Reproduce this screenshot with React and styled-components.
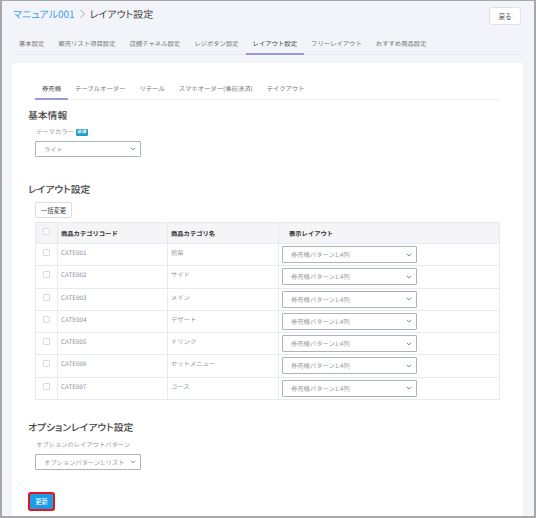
import React from 'react'
import styled, { createGlobalStyle } from 'styled-components'

const c_blue = '#3c9ee5'
const c_line = '#e8eaf2'
const c_text = '#444'
const c_muted = '#999'

const GlobalStyle = createGlobalStyle`
  html, body {
    margin: 0;
    padding: 0;
    background: #fff;
  }
  * {
    box-sizing: border-box;
  }
  body {
    font-family: "Noto Sans CJK JP", "Noto Sans", sans-serif;
    text-rendering: geometricPrecision;
    color: ${c_text};
  }
`

const Frame = styled.div`
  width: 536px;
  height: 518px;
  overflow: hidden;
  background: #f3f4f9;
  border-top: 1px solid #a7a7a7;
  border-left: 2px solid #a7a7a7;
  border-right: 2px solid #a7a7a7;
  border-bottom: 2px solid #a7a7a7;
`

const Header = styled.div`
  display: flex;
  justify-content: space-between;
  align-items: flex-start;
  padding: 4px 13px 0 11px;
`

const Title = styled.div`
  display: flex;
  align-items: center;
  gap: 5px;
  font-size: 10px;
  line-height: 17px;
  font-feature-settings: "palt" 1;
  color: ${c_text};
  a {
    color: ${c_blue};
    text-decoration: none;
  }
  svg {
    color: #aaa;
  }
`

const BackButton = styled.button`
  margin-top: 2px;
  width: 32px;
  height: 18px;
  padding: 0;
  border: 1px solid #dde2ee;
  border-radius: 3px;
  background: #fff;
  font-family: inherit;
  font-size: 6.3px;
  color: ${c_text};
`

const Tabs = styled.div`
  display: flex;
  margin: ${p => (p.inner ? '16px 7px 0' : '8px 10px 0')};
  border-bottom: 1px solid ${p => (p.inner ? '#eef0f6' : c_line)};
`

const Tab = styled.div`
  padding: 4px 7px 3px;
  line-height: ${p => (p.inner ? '12px' : '13px')};
  font-size: 6.35px;
  white-space: nowrap;
  color: ${p => (p.active ? c_text : '#777')};
  border-bottom: 2px solid ${p => (p.active ? '#9899dd' : 'transparent')};
  margin-bottom: -1px;
`

const Card = styled.div`
  margin: 8px 11px 0 10px;
  padding: 0 16px 40px;
  background: #fff;
  border-radius: 3px;
  overflow: hidden;
`

const SectionTitle = styled.div`
  margin-top: ${p => p.gap}px;
  font-size: 9.8px;
  line-height: 14px;
  font-weight: 500;
  font-feature-settings: "palt" 1;
  color: ${c_text};
`

const Field = styled.div`
  padding-left: 7px;
`

const Label = styled.div`
  display: flex;
  align-items: center;
  gap: 2px;
  margin-top: ${p => p.gap}px;
  padding-left: 1px;
  font-size: 6.3px;
  line-height: 10px;
  color: ${c_muted};
`

const Badge = styled.span`
  display: inline-flex;
  align-items: center;
  justify-content: center;
  width: 12px;
  height: 7px;
  border-radius: 1px;
  background: #1b9fc6;
  color: #fff;
  font-size: 4.5px;
  font-weight: 700;
`

const Select = styled.div`
  display: flex;
  align-items: center;
  justify-content: space-between;
  width: ${p => p.width}px;
  height: ${p => p.height || 16}px;
  margin-top: ${p => p.gap || 0}px;
  padding: 0 4px 0 8px;
  border: 1px solid #aeb0c6;
  border-radius: 1px;
  background: #fff;
  font-size: 6.3px;
  color: ${c_muted};
  white-space: nowrap;
  svg {
    color: #747a92;
    flex-shrink: 0;
  }
`

const Button = styled.button`
  display: block;
  margin-top: 6px;
  width: 37px;
  height: 16px;
  padding: 0;
  border: 1px solid #d6ddeb;
  border-radius: 2px;
  background: #fff;
  font-family: inherit;
  font-size: 6.3px;
  color: ${c_text};
`

const Table = styled.table`
  width: 465px;
  margin: 4px 0 0 7px;
  border-collapse: collapse;
  table-layout: fixed;
  border: 1px solid ${c_line};
`

const Th = styled.th`
  height: 21px;
  padding: 0 3px 0 ${p => p.indent || 3}px;
  background: #f5f5f7;
  border-right: 1px solid ${c_line};
  text-align: left;
  font-size: 6.3px;
  font-weight: 700;
  color: #333;
  vertical-align: middle;
`

const Tr = styled.tr`
  height: 22.3px;
  border-top: 1px solid ${c_line};
`

const Td = styled.td`
  padding: 3px 3px 0;
  border-right: 1px solid ${c_line};
  font-size: 6.3px;
  line-height: 11px;
  color: ${p => (p.code ? '#8c90a0' : c_muted)};
  vertical-align: top;
`

const SelectTd = styled(Td)`
  padding: 2px 3px 0;
`

const Check = styled.span`
  display: block;
  width: 7px;
  height: 7px;
  margin: ${p => (p.head ? '-3px' : '2px')} auto 0;
  border: 1px solid #d8dbe6;
  border-radius: 1px;
  background: #fff;
`

const SubmitButton = styled.button`
  display: block;
  margin: 24px 0 0 2px;
  width: 23px;
  height: 15px;
  padding: 0;
  border: none;
  border-radius: 1px;
  background: #1a9ce6;
  box-shadow: 0 0 0 2px #e8141c;
  outline: none;
  font-family: inherit;
  font-size: 6.3px;
  color: #fff;
`

const Chevron = ({ size = 6 }) => (
  <svg width={size} height={size} viewBox="0 0 10 10" fill="none">
    <path d="M2 3.5 L5 6.5 L8 3.5" stroke="currentColor" strokeWidth="1.6" strokeLinecap="round" strokeLinejoin="round" />
  </svg>
)

const Arrow = () => (
  <svg width="5" height="10" viewBox="0 0 5 10" fill="none">
    <path d="M0.5 1 L4.5 5 L0.5 9" stroke="currentColor" strokeWidth="1" />
  </svg>
)

const mainTabs = ['基本設定', '販売リスト項目設定', '店舗チャネル設定', 'レジボタン設定', 'レイアウト設定', 'フリーレイアウト', 'おすすめ商品設定']
const subTabs = ['券売機', 'テーブルオーダー', 'リテール', 'スマホオーダー(事前決済)', 'テイクアウト']

const categories = [
  { code: 'CATE001', name: '前菜' },
  { code: 'CATE002', name: 'サイド' },
  { code: 'CATE003', name: 'メイン' },
  { code: 'CATE004', name: 'デザート' },
  { code: 'CATE005', name: 'ドリンク' },
  { code: 'CATE006', name: 'セットメニュー' },
  { code: 'CATE007', name: 'コース' },
]

export default function App() {
  return (
    <Frame>
      <GlobalStyle />
      <Header>
        <Title>
          <a href="#">マニュアル001</a>
          <Arrow />
          <span>レイアウト設定</span>
        </Title>
        <BackButton>戻る</BackButton>
      </Header>

      <Tabs>
        {mainTabs.map(t => (
          <Tab key={t} active={t === 'レイアウト設定'}>{t}</Tab>
        ))}
      </Tabs>

      <Card>
        <Tabs inner>
          {subTabs.map(t => (
            <Tab key={t} inner active={t === '券売機'}>{t}</Tab>
          ))}
        </Tabs>

        <SectionTitle gap={8}>基本情報</SectionTitle>
        <Field>
          <Label gap={5}>
            テーマカラー<Badge>必須</Badge>
          </Label>
          <Select width={106} gap={4}>
            ライト
            <Chevron />
          </Select>
        </Field>

        <SectionTitle gap={25}>レイアウト設定</SectionTitle>
        <Field>
          <Button>一括変更</Button>
        </Field>
        <Table>
          <colgroup>
            <col style={{ width: 22 }} />
            <col style={{ width: 110 }} />
            <col style={{ width: 111 }} />
            <col />
          </colgroup>
          <thead>
            <tr>
              <Th><Check head /></Th>
              <Th>商品カテゴリコード</Th>
              <Th>商品カテゴリ名</Th>
              <Th indent={10}>表示レイアウト</Th>
            </tr>
          </thead>
          <tbody>
            {categories.map(c => (
              <Tr key={c.code}>
                <Td><Check /></Td>
                <Td code>{c.code}</Td>
                <Td>{c.name}</Td>
                <SelectTd>
                  <Select width={135} height={17}>
                    券売機パターン1:4列
                    <Chevron />
                  </Select>
                </SelectTd>
              </Tr>
            ))}
          </tbody>
        </Table>

        <SectionTitle gap={20}>オプションレイアウト設定</SectionTitle>
        <Field>
          <Label gap={6}>オプションのレイアウトパターン</Label>
          <Select width={106} gap={4}>
            オプションパターン1:リスト
            <Chevron />
          </Select>
        </Field>
        <SubmitButton>更新</SubmitButton>
      </Card>
    </Frame>
  )
}
